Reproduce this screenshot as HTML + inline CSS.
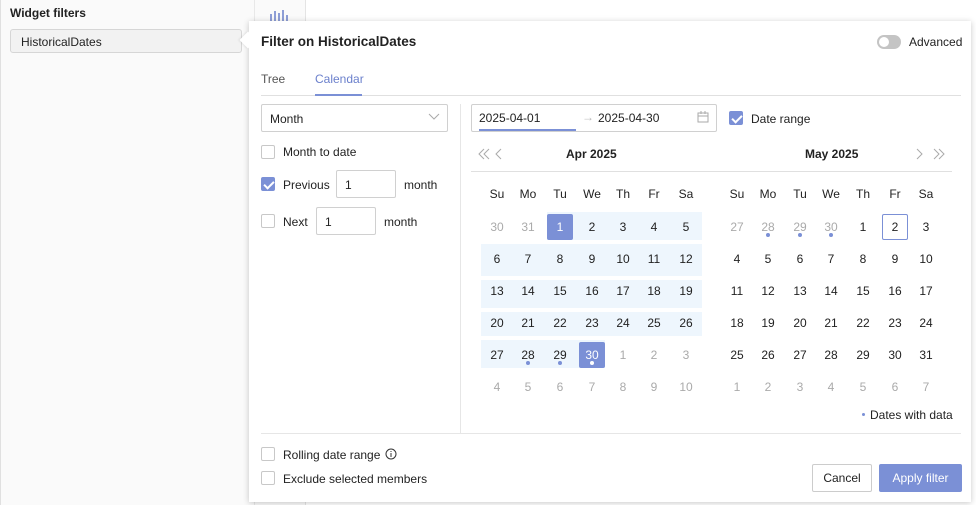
<!DOCTYPE html>
<html><head><meta charset="utf-8"><style>
*{box-sizing:border-box;margin:0;padding:0}
body{width:976px;height:505px;overflow:hidden;background:#fff;font-family:"Segoe UI","Liberation Sans",sans-serif;font-size:12px;color:#222;position:relative}
.a{position:absolute}
.cb{position:absolute;width:14px;height:14px;border:1px solid #c8c8c8;border-radius:2px;background:#fff}
.cb.on{background:#7b90d6;border-color:#7b90d6}
.cb.on:after{content:"";position:absolute;left:4px;top:1px;width:4px;height:8px;border:solid #fff;border-width:0 2px 2px 0;transform:rotate(45deg)}
.inp{position:absolute;border:1px solid #d0d0d0;background:#fff;border-radius:2px}
.d{position:absolute;width:26px;height:26px;line-height:26px;text-align:center;font-size:12px}
.g{color:#aaa}
.sel{background:#7b90d6;color:#fff;border-radius:2px}
.dot{position:absolute;width:4px;height:4px;border-radius:2px;background:#7b90d6}
.hd{position:absolute;width:30px;text-align:center;font-size:12px;top:187px}
</style></head><body>
<div class="a" style="left:0;top:0;width:306px;height:505px;background:#fafafa;border-right:1px solid #e4e4e4"></div>
<div class="a" style="left:254px;top:0;width:1px;height:505px;background:#e8e8e8"></div>
<div class="a" style="left:0;top:0;width:1px;height:505px;background:#e0e0e0"></div>
<div class="a" style="left:10px;top:6px;font-weight:bold;font-size:12px">Widget filters</div>
<div class="a" style="left:10px;top:29px;width:232px;height:24px;border:1px solid #d6d6d6;border-radius:3px;background:#f2f2f2;padding:5px 10px;font-size:12px">HistoricalDates</div>
<svg class="a" style="left:268px;top:9px" width="24" height="14"><g fill="#8e9ed6"><rect x="2" y="5" width="2" height="9"/><rect x="6" y="2" width="2" height="12"/><rect x="10" y="4" width="2" height="10"/><rect x="14" y="1" width="2" height="13"/><rect x="18" y="6" width="2" height="8"/></g></svg>

<div class="a" style="left:249px;top:21px;width:722px;height:481px;background:#fff;box-shadow:0 1px 6px rgba(0,0,0,.22)"></div>
<div class="a" style="left:242px;top:34px;width:12px;height:12px;background:#fff;transform:rotate(45deg);box-shadow:-1px 1px 2px rgba(0,0,0,.08)"></div>
<div class="a" style="left:249px;top:25px;width:12px;height:25px;background:#fff"></div>

<div class="a" style="left:261px;top:34px;font-weight:bold;font-size:13.5px">Filter on HistoricalDates</div>
<div class="a" style="left:877px;top:35px;width:24px;height:14px;border-radius:7px;background:#c4c4c4"></div>
<div class="a" style="left:879px;top:37px;width:10px;height:10px;border-radius:5px;background:#fff"></div>
<div class="a" style="left:909px;top:35px;font-size:12px">Advanced</div>

<div class="a" style="left:261px;top:72px;color:#555">Tree</div>
<div class="a" style="left:315px;top:72px;color:#6b80cc">Calendar</div>
<div class="a" style="left:261px;top:95px;width:700px;height:1px;background:#e0e0e0"></div>
<div class="a" style="left:315px;top:94px;width:47px;height:2px;background:#7b90d6"></div>

<div class="inp" style="left:261px;top:104px;width:187px;height:28px;padding:7px 8px">Month</div>
<svg class="a" style="left:428px;top:113px" width="12" height="8"><path d="M1 1 L6 6 L11 1" fill="none" stroke="#aaa" stroke-width="1"/></svg>
<div class="cb" style="left:261px;top:145px"></div><div class="a" style="left:283px;top:145px">Month to date</div>
<div class="cb on" style="left:261px;top:177px"></div><div class="a" style="left:283px;top:178px">Previous</div>
<div class="inp" style="left:336px;top:170px;width:60px;height:28px;padding:7px 8px">1</div>
<div class="a" style="left:404px;top:178px">month</div>
<div class="cb" style="left:261px;top:214px"></div><div class="a" style="left:283px;top:215px">Next</div>
<div class="inp" style="left:316px;top:207px;width:60px;height:28px;padding:7px 8px">1</div>
<div class="a" style="left:384px;top:215px">month</div>

<div class="a" style="left:460px;top:104px;width:1px;height:329px;background:#e6e6e6"></div>

<div class="inp" style="left:471px;top:104px;width:246px;height:28px"></div>
<div class="a" style="left:479px;top:111px">2025-04-01</div>
<div class="a" style="left:479px;top:129px;width:97px;height:2px;background:#7b90d6"></div>
<div class="a" style="left:582px;top:110px;color:#bbb">→</div>
<div class="a" style="left:598px;top:111px">2025-04-30</div>
<svg class="a" style="left:697px;top:111px" width="12" height="12"><rect x="1" y="2" width="10" height="9" fill="none" stroke="#aaa"/><path d="M1 5h10M4 0v3M8 0v3" stroke="#aaa"/></svg>
<div class="cb on" style="left:729px;top:111px"></div><div class="a" style="left:751px;top:112px">Date range</div>

<svg class="a" style="left:478px;top:148px" width="32" height="12"><path d="M6 1 L1 6 L6 11 M11 1 L6 6 L11 11 M23 1 L18 6 L23 11" fill="none" stroke="#aaa"/></svg>
<div class="a" style="left:566px;top:147px;font-weight:bold">Apr 2025</div>
<div class="a" style="left:805px;top:147px;font-weight:bold">May 2025</div>
<svg class="a" style="left:915px;top:148px" width="32" height="12"><path d="M2 1 L7 6 L2 11 M19 1 L24 6 L19 11 M24 1 L29 6 L24 11" fill="none" stroke="#aaa"/></svg>
<div class="a" style="left:471px;top:171px;width:481px;height:1px;background:#e0e0e0"></div>

<div class="a" style="left:547px;top:212px;width:155px;height:28px;background:#eef6fd"></div>
<div class="a" style="left:481px;top:244px;width:221px;height:92px;background:#eef6fd"></div>
<div class="a" style="left:481px;top:340px;width:124px;height:28px;background:#eef6fd"></div>
<div class="a" style="left:481px;top:276px;width:221px;height:4px;background:#fff"></div>
<div class="a" style="left:481px;top:308px;width:221px;height:4px;background:#fff"></div>
<div class="a" style="left:481px;top:240px;width:221px;height:4px;background:#fff"></div>
<div class="a" style="left:481px;top:336px;width:221px;height:4px;background:#fff"></div>

<div id="cal"></div>
<script>
var h=["Su","Mo","Tu","We","Th","Fr","Sa"],ax=[497,528,560,592,623,654,686],mx=[737,768,800,831,863,895,926],s="";
for(var i=0;i<7;i++){s+='<div class="hd" style="left:'+(ax[i]-15)+'px">'+h[i]+'</div><div class="hd" style="left:'+(mx[i]-15)+'px">'+h[i]+'</div>';}
var A=[[30,31,1,2,3,4,5],[6,7,8,9,10,11,12],[13,14,15,16,17,18,19],[20,21,22,23,24,25,26],[27,28,29,30,1,2,3],[4,5,6,7,8,9,10]];
var M=[[27,28,29,30,1,2,3],[4,5,6,7,8,9,10],[11,12,13,14,15,16,17],[18,19,20,21,22,23,24],[25,26,27,28,29,30,31],[1,2,3,4,5,6,7]];
for(var r=0;r<6;r++){var y=213+r*32;for(var c=0;c<7;c++){
var g=(r==0&&c<2)||(r==4&&c>3)||r==5,cl="d"+(g?" g":"");
if((r==0&&c==2)||(r==4&&c==3))cl+=" sel";
s+='<div class="'+cl+'" style="left:'+(ax[c]-13)+'px;top:'+(y+1)+'px">'+A[r][c]+'</div>';
if(r==4&&c>0&&c<4)s+='<div class="dot" style="left:'+(ax[c]-2)+'px;top:'+(y+20)+'px;'+(c==3?'background:#fff':'')+'"></div>';
var mg=(r==0&&c<4)||r==5,mc="d"+(mg?" g":"");
var st=(r==0&&c==5)?'border:1px solid #7b90d6;border-radius:2px;line-height:24px;':'';
s+='<div class="'+mc+'" style="left:'+(mx[c]-13)+'px;top:'+(y+1)+'px;'+st+'">'+M[r][c]+'</div>';
if(r==0&&c>0&&c<4)s+='<div class="dot" style="left:'+(mx[c]-2)+'px;top:'+(y+20)+'px"></div>';
}}
document.getElementById('cal').innerHTML=s;
</script>
<div class="dot" style="left:862px;top:413px;width:3px;height:3px"></div>
<div class="a" style="left:870px;top:408px;font-size:12px">Dates with data</div>

<div class="a" style="left:261px;top:433px;width:700px;height:1px;background:#e6e6e6"></div>
<div class="cb" style="left:261px;top:447px"></div><div class="a" style="left:283px;top:448px">Rolling date range</div>
<svg class="a" style="left:385px;top:448px" width="12" height="12"><circle cx="6" cy="6" r="5" fill="none" stroke="#333"/><path d="M6 5v4M6 3v1" stroke="#333"/></svg>
<div class="cb" style="left:261px;top:471px"></div><div class="a" style="left:283px;top:472px">Exclude selected members</div>
<div class="a" style="left:812px;top:464px;width:60px;height:28px;border:1px solid #ccc;border-radius:2px;text-align:center;line-height:26px">Cancel</div>
<div class="a" style="left:879px;top:464px;width:83px;height:28px;background:#7b90d6;border-radius:2px;color:#fff;text-align:center;line-height:28px">Apply filter</div>
</body></html>
